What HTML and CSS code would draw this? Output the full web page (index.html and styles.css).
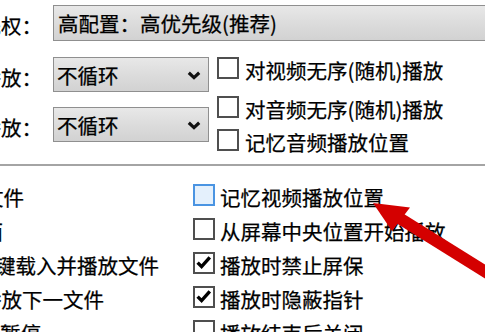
FILE: index.html
```html
<!DOCTYPE html>
<html lang="zh-CN">
<head>
<meta charset="utf-8">
<title>播放设置</title>
<link rel="stylesheet" href="styles.css">
</head>
<body>
<div class="page">
  <div class="row-top">
    <div class="label">进程优先权：</div>
    <div class="select select-wide"><span>高配置：高优先级(推荐)</span></div>
  </div>

  <div class="mid">
    <div class="selects">
      <div class="srow">
        <div class="label">视频循环播放：</div>
        <div class="select select-narrow">
          <span>不循环</span>
          <svg class="chev" width="14" height="9" viewBox="0 0 14 9"><polyline points="1.8,1.8 7,6.6 12.2,1.8" fill="none" stroke="#111" stroke-width="3.2" stroke-linecap="butt" stroke-linejoin="miter"/></svg>
        </div>
      </div>
      <div class="srow">
        <div class="label">音频循环播放：</div>
        <div class="select select-narrow">
          <span>不循环</span>
          <svg class="chev" width="14" height="9" viewBox="0 0 14 9"><polyline points="1.8,1.8 7,6.6 12.2,1.8" fill="none" stroke="#111" stroke-width="3.2" stroke-linecap="butt" stroke-linejoin="miter"/></svg>
        </div>
      </div>
    </div>
    <div class="checks">
      <div class="check"><span class="box"></span><span class="txt">对视频无序(随机)播放</span></div>
      <div class="check c2"><span class="box"></span><span class="txt">对音频无序(随机)播放</span></div>
      <div class="check c3"><span class="box"></span><span class="txt">记忆音频播放位置</span></div>
    </div>
  </div>

  <div class="sep"></div>

  <div class="bottom">
    <div class="lrow i1">自动关联文件</div>
    <div class="rrow"><span class="box hover"></span><span class="txt">记忆视频播放位置</span></div>

    <div class="lrow i2">显示界面</div>
    <div class="rrow"><span class="box"></span><span class="txt">从屏幕中央位置开始播放</span></div>

    <div class="lrow i3">键载入并播放文件</div>
    <div class="rrow"><span class="box"><svg class="tick" width="18" height="18" viewBox="0 0 18 18"><path d="M2.6 8.6 L6.6 12.6 L14.8 3.4" fill="none" stroke="#000" stroke-width="3.4"/></svg></span><span class="txt">播放时禁止屏保</span></div>

    <div class="lrow i4">播放下一文件</div>
    <div class="rrow"><span class="box"><svg class="tick" width="18" height="18" viewBox="0 0 18 18"><path d="M2.6 8.6 L6.6 12.6 L14.8 3.4" fill="none" stroke="#000" stroke-width="3.4"/></svg></span><span class="txt">播放时隐蔽指针</span></div>

    <div class="lrow i5">暂停</div>
    <div class="rrow"><span class="box"></span><span class="txt">播放结束后关闭</span></div>
  </div>

  <svg class="arrow" width="485" height="332" viewBox="0 0 485 332">
    <line x1="396" y1="216" x2="505" y2="284" stroke="#d40000" stroke-width="12"/>
    <polygon points="373,203 410,207.5 392,231" fill="#d40000"/>
  </svg>
</div>
</body>
</html>
```

FILE: styles.css
```css
body {
  margin: 0;
  width: 485px;
  height: 332px;
  overflow: hidden;
  background: #fff;
  font-family: "Noto Sans CJK SC", "Noto Sans CJK TC", sans-serif;
  font-size: 20.5px;
  color: #000;
  -webkit-text-stroke: 0.25px #000;
}

.page {
  position: relative;
  width: 485px;
  height: 332px;
  box-sizing: border-box;
  padding-top: 5px;
  overflow: hidden;
}

.row-top {
  display: flex;
  align-items: center;
  height: 36px;
}

.label {
  flex: 0 0 53px;
  width: 53px;
  box-sizing: border-box;
  padding-right: 11px;
  padding-top: 4px;
  display: flex;
  justify-content: flex-end;
  overflow: hidden;
  white-space: nowrap;
  line-height: 22px;
}

.select {
  box-sizing: border-box;
  border: 1px solid #8f8f8f;
  background: linear-gradient(#e8e8e8, #dcdcdc 50%, #d2d2d2);
  display: flex;
  align-items: center;
  padding-left: 3px;
  line-height: 22px;
  white-space: nowrap;
  flex: none;
}

.select-wide {
  width: 470px;
  height: 36px;
  padding-left: 4px;
}

.select-narrow {
  width: 156px;
  height: 35px;
  justify-content: space-between;
  padding-right: 7px;
}

.chev {
  display: block;
  margin-top: 1px;
}

.mid {
  display: flex;
  margin-top: 16px;
}

.selects {
  display: flex;
  flex-direction: column;
  gap: 15px;
}

.srow {
  display: flex;
  align-items: center;
  height: 35px;
}

.checks {
  margin-left: 8px;
  display: flex;
  flex-direction: column;
}

.check {
  display: flex;
  align-items: flex-start;
  height: 22px;
  gap: 6px;
  white-space: nowrap;
}

.check .txt {
  line-height: 22px;
  margin-top: 2px;
}

.c2 { margin-top: 17px; }
.c3 { margin-top: 11px; }

.box {
  width: 22px;
  height: 22px;
  box-sizing: border-box;
  border: 2px solid #4f4f4f;
  background: #fff;
  flex: none;
  display: flex;
  align-items: center;
  justify-content: center;
}

.box.hover {
  border-color: #4a94e2;
  background: #e4f0fc;
}

.tick { display: block; }

.sep {
  height: 2px;
  background: #a4a4a4;
  margin-top: 13px;
}

.bottom {
  display: grid;
  grid-template-columns: 193px 1fr;
  grid-auto-rows: 34px;
  margin-top: 12px;
}

.lrow {
  overflow: hidden;
  white-space: nowrap;
  line-height: 34px;
  padding-top: 2px;
  box-sizing: border-box;
}

.i1 { text-indent: -99px; }
.i2 { text-indent: -79px; }
.i3 { text-indent: -5px; }
.i4 { text-indent: -19px; }
.i5 { text-indent: 0; }

.rrow {
  display: flex;
  align-items: center;
  gap: 5px;
  white-space: nowrap;
}

.rrow .txt {
  line-height: 22px;
  padding-top: 4px;
}

.arrow {
  position: absolute;
  left: 0;
  top: 0;
  pointer-events: none;
}
```
